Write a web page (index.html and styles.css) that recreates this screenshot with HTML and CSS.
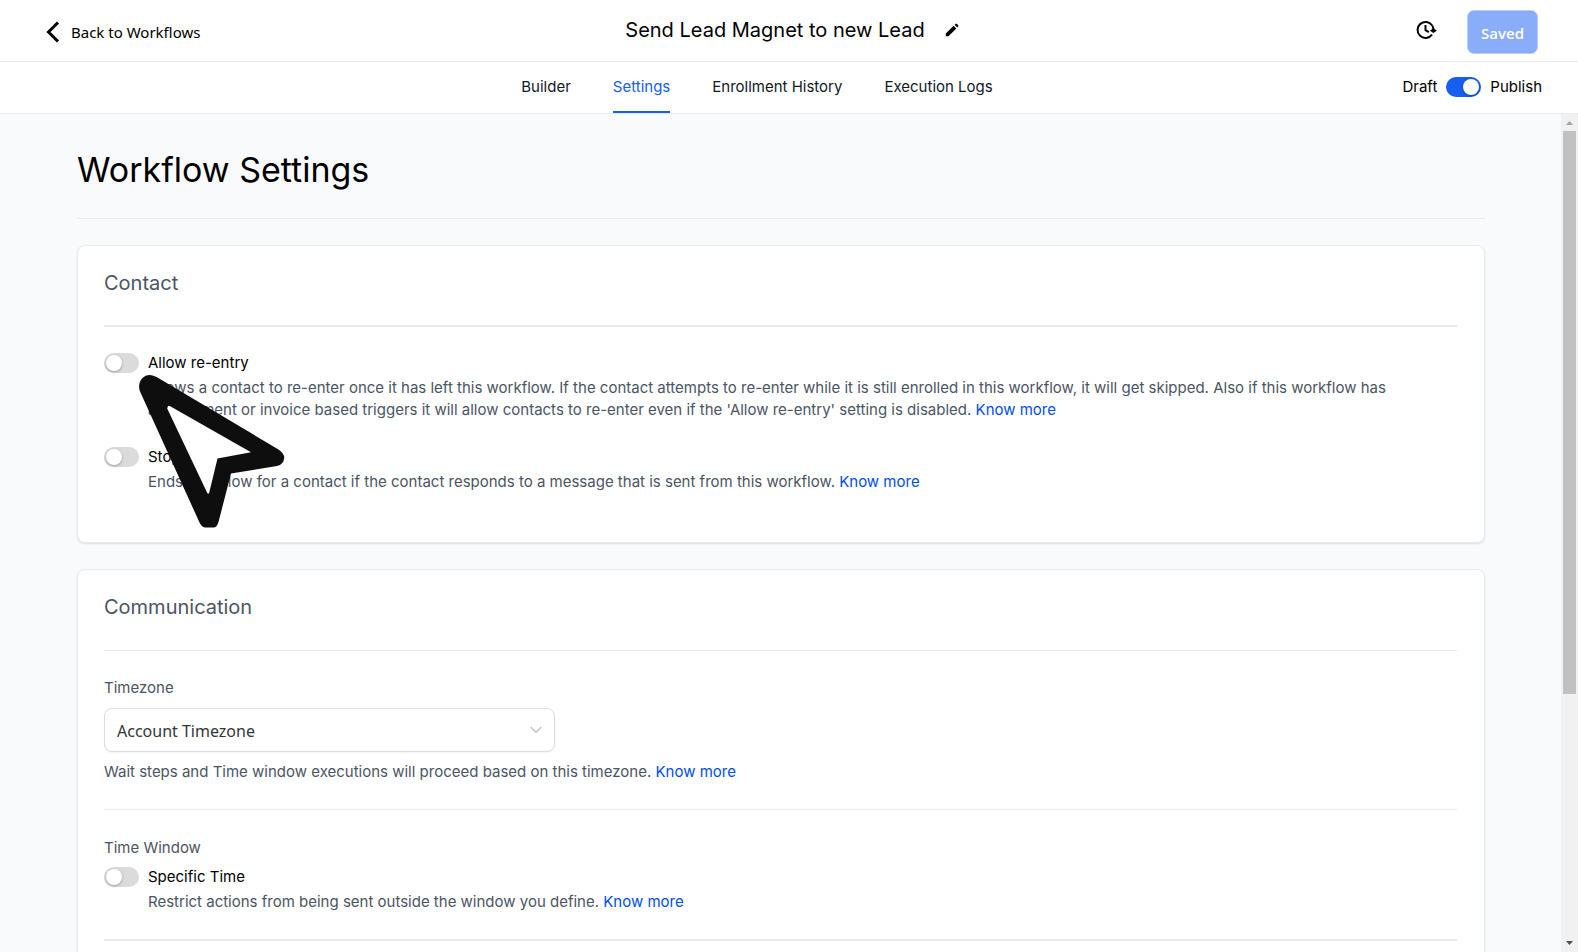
FILE: index.html
```html
<!DOCTYPE html>
<html lang="en">
<head>
<meta charset="utf-8">
<meta name="viewport" content="width=device-width, initial-scale=1">
<title>Workflow Settings</title>
<link rel="stylesheet" href="styles.css">
</head>
<body>
<div class="app">
  <header class="topbar">
    <a class="back" href="#">
      <svg class="back-icon" width="14" height="22" viewBox="0 0 14 22" fill="none" stroke="currentColor" stroke-width="3"><path d="M12 1.500 2.500 11 12 20.500"/></svg>
      <span>Back to Workflows</span>
    </a>
    <div class="name">
      <span>Send Lead Magnet to new Lead</span>
      <button class="icon-btn" type="button" aria-label="Rename workflow">
        <svg width="14" height="14" viewBox="0 0 14 14" fill="currentColor"><path d="M.8 13.200v-2.700L8.600 2.700l2.700 2.700-7.800 7.800zM9.600 1.800l.9-.9q.7-.7 1.400 0l1.200 1.200q.7.700 0 1.400l-.9.900z"/></svg>
      </button>
    </div>
    <div class="actions">
      <button class="icon-btn" type="button" aria-label="Version history">
        <svg width="21" height="20" viewBox="0 0 21 20" fill="none" stroke="currentColor" stroke-width="2"><path d="M16.200 5.500A8 8 0 1 0 16 14.700"/><path d="M16.200 5.500q1.300 1.800 1.300 5"/><path d="M9.500 5v5.200l3.400 2"/><path d="M14 10.800 17.400 8l3.400 2.800-3.400 2.200z" fill="currentColor" stroke="none"/></svg>
      </button>
      <button class="saved" type="button">Saved</button>
    </div>
  </header>

  <div class="tabbar">
    <nav class="tabs">
      <a class="tab" href="#">Builder</a>
      <a class="tab tab-active" href="#" aria-current="page">Settings</a>
      <a class="tab" href="#">Enrollment History</a>
      <a class="tab" href="#">Execution Logs</a>
    </nav>
    <div class="publish">
      <span>Draft</span>
      <input class="switch" type="checkbox" role="switch" id="publish" checked>
      <label for="publish">Publish</label>
    </div>
  </div>

  <div class="body">
    <main class="content">
      <h1 class="page-title">Workflow Settings</h1>

      <section class="card">
        <h2 class="card-title">Contact</h2>
        <div class="block block-first">
          <div class="option">
            <input class="switch" type="checkbox" role="switch" id="reentry">
            <div class="option-text">
              <label class="option-label" for="reentry">Allow re-entry</label>
              <p class="help">Allows a contact to re-enter once it has left this workflow. If the contact attempts to re-enter while it is still enrolled in this workflow, it will get skipped. Also if this workflow has appointment or invoice based triggers it will allow contacts to re-enter even if the 'Allow re-entry' setting is disabled. <a class="more" href="#">Know more</a></p>
            </div>
          </div>
          <div class="option">
            <input class="switch" type="checkbox" role="switch" id="stop">
            <div class="option-text">
              <label class="option-label" for="stop">Stop</label>
              <p class="help">Ends workflow for a contact if the contact responds to a message that is sent from this workflow. <a class="more" href="#">Know more</a></p>
            </div>
          </div>
        </div>
        <svg class="pointer" width="146" height="154" viewBox="0 0 146 154" aria-hidden="true"><path fill="#0e0e0e" d="M.8 17C-2 8 4 .8 11 1q3.500.2 7 2.200L139.500 75.500q5.800 3.800 5.700 8.500-.5 6.500-7.200 8L92 99.500 79.500 148q-1.600 5.500-5 5.500h-8q-3.500 0-6-5z"/><path fill="#fff" d="M28.200 34.500q.4-3.700 3-2.200L112 78.300 78.500 84.500 70 119.500h-1.500z"/></svg>
      </section>

      <section class="card">
        <h2 class="card-title card-title-tall">Communication</h2>
        <div class="block">
          <label class="field-label" for="timezone">Timezone</label>
          <div class="select-wrap">
            <select class="select" id="timezone"><option>Account Timezone</option></select>
            <svg class="chevron" width="12" height="8" viewBox="0 0 12 8" fill="none" stroke="#bfc0c6" stroke-width="1.300"><path d="M.7 1 6 6.300 11.300 1"/></svg>
          </div>
          <p class="help">Wait steps and Time window executions will proceed based on this timezone. <a class="more" href="#">Know more</a></p>
        </div>
        <div class="block">
          <h3 class="field-label field-heading">Time Window</h3>
          <div class="option">
            <input class="switch" type="checkbox" role="switch" id="specific">
            <div class="option-text">
              <label class="option-label" for="specific">Specific Time</label>
              <p class="help">Restrict actions from being sent outside the window you define. <a class="more" href="#">Know more</a></p>
            </div>
          </div>
        </div>
        <div class="block block-first"></div>
      </section>
    </main>
    <div class="scrollbar" aria-hidden="true">
      <svg class="scroll-arrow" width="17" height="17" viewBox="0 0 17 17"><path d="M5 11 8.500 7 12 11z" fill="#a3a3a3"/></svg>
      <div class="scroll-track"><div class="scroll-thumb"></div></div>
      <svg class="scroll-arrow" width="17" height="17" viewBox="0 0 17 17"><path d="M5 6h7L8.500 10z" fill="#505050"/></svg>
    </div>
  </div>
</div>
</body>
</html>
```

FILE: styles.css
```css
*, *::before, *::after { box-sizing: border-box; }
body {
  margin: 0;
  font: 15px/22px Inter, "Liberation Sans", sans-serif;
  color: #000;
  background: #fff;
}
h1, h2, h3, p { margin: 0; font-weight: 400; }
a { color: inherit; text-decoration: none; }
button { font: inherit; color: inherit; cursor: pointer; }

.app { display: flex; flex-direction: column; height: 100vh; overflow: hidden; }

.topbar {
  display: grid;
  grid-template-columns: 1fr auto 1fr;
  align-items: center;
  flex: none;
  height: 62px;
  padding: 0 40px 0 46px;
  border-bottom: 1px solid #e9eaed;
}
.back {
  display: flex;
  align-items: center;
  gap: 11px;
  padding-top: 3px;
  font-family: "Noto Sans", sans-serif;
}
.name { display: flex; align-items: center; gap: 20px; padding-bottom: 2px; font-size: 20px; }
.icon-btn { display: flex; padding: 0; border: 0; background: none; }
.actions { display: flex; align-items: center; justify-content: flex-end; gap: 30px; padding-top: 2px; }
.actions .icon-btn { padding-bottom: 4px; }
.saved {
  height: 44px;
  padding: 2px 13px 0;
  border: 1px solid #b9cefc;
  border-radius: 7px;
  background: #8aadf9;
  color: #fff;
  font: 600 15px/22px "Open Sans", sans-serif;
}

.tabbar {
  display: grid;
  grid-template-columns: 1fr auto 1fr;
  flex: none;
  height: 52px;
  padding: 0 36px;
  border-bottom: 1px solid #e9eaed;
}
.tabs { grid-column: 2; display: flex; gap: 42px; margin-right: 64px; }
.tab { padding-top: 14px; border-bottom: 2px solid transparent; color: #111827; }
.tab-active { border-color: #155eef; color: #155eef; }
.publish { display: flex; align-items: center; justify-content: flex-end; gap: 9px; padding-bottom: 1px; }

.switch {
  appearance: none;
  display: flex;
  align-items: center;
  flex: none;
  width: 35px;
  height: 20px;
  margin: 0;
  padding: 0 2px;
  border-radius: 10px;
  background: #dbdbdb;
}
.switch::before {
  content: "";
  width: 16px;
  height: 16px;
  border-radius: 50%;
  background: #fff;
  box-shadow: 0 1px 3px rgba(0, 0, 0, .3);
}
.switch:checked { justify-content: flex-end; background: #155eef; }

.body { display: flex; flex: 1; min-height: 0; }
.content { flex: 1; min-width: 0; overflow: hidden; padding: 34px 76px 0 77px; background: #f9fafc; }
.page-title {
  padding-bottom: 26px;
  margin-bottom: 26px;
  border-bottom: 1px solid #e9eaed;
  font-size: 34px;
  line-height: 44px;
}

.card {
  position: relative;
  margin-bottom: 26px;
  padding: 25px 27px 23px 26px;
  border: 1px solid #eaebee;
  border-radius: 8px;
  background: #fff;
  box-shadow: 0 1px 2px rgba(16, 24, 40, .12);
}
.card-title { margin-bottom: 30px; color: #4b5563; font-size: 20px; line-height: 24px; }
.card-title-tall { margin-bottom: 31px; }
.block { padding: 26px 0; border-top: 1px solid #e9eaed; }
.block-first { border-top-width: 2px; }
.option { display: flex; gap: 9px; }
.option + .option { margin-top: 26px; }
.option-text { flex: 1; }
.option-label { display: block; line-height: 20px; margin-bottom: 4px; }
.help { color: #4b5563; }
.more { color: #004eeb; }

.field-label { display: block; margin-bottom: 9px; color: #4b5563; }
.field-heading { margin-bottom: 7px; font-size: 15px; line-height: 24px; }
.select-wrap { position: relative; width: 33.33%; margin-bottom: 9px; }
.select {
  appearance: none;
  display: block;
  width: 100%;
  height: 44px;
  padding: 2px 36px 0 12px;
  border: 1px solid #dcdde5;
  border-radius: 8px;
  background: #fff;
  box-shadow: 0 1px 2px rgba(16, 24, 40, .05);
  color: #333639;
  font: 16px/24px "Noto Sans", sans-serif;
}
.chevron { position: absolute; top: 18px; right: 13px; pointer-events: none; }
.pointer { position: absolute; top: 128px; left: 61px; pointer-events: none; }

.scrollbar { display: flex; flex-direction: column; flex: none; width: 17px; background: #f1f1f1; }
.scroll-arrow { flex: none; }
.scroll-track { flex: 1; padding: 0 2px; }
.scroll-thumb { height: 70%; background: #c1c1c1; }
```
